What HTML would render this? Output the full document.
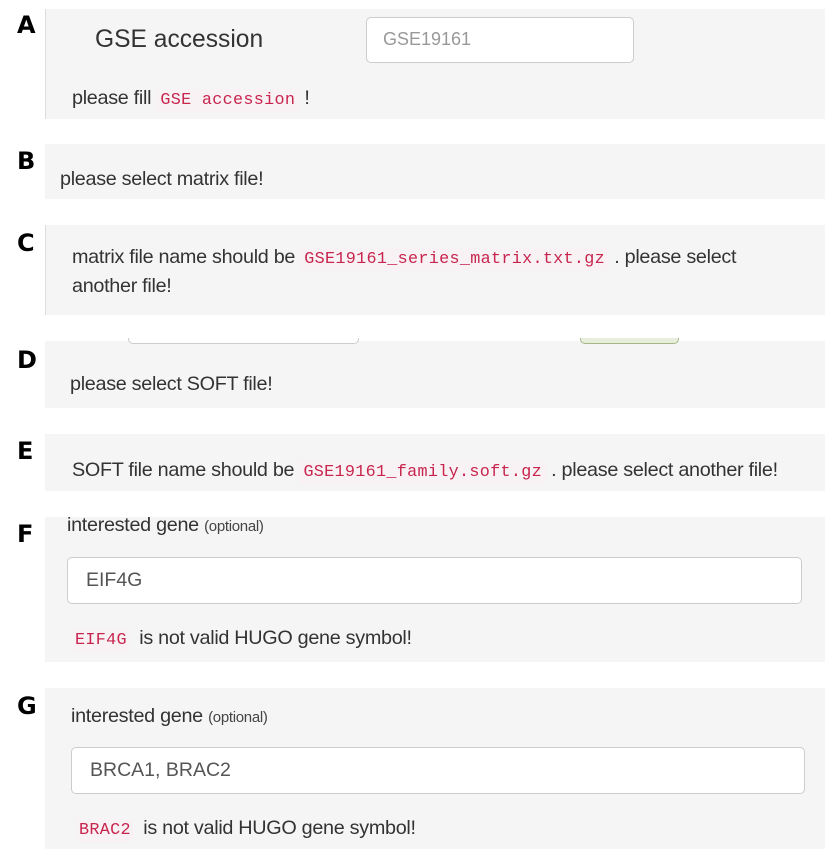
<!DOCTYPE html>
<html><head><style>
body{margin:0;width:825px;height:849px;background:#fff;position:relative;font-family:"Liberation Sans",sans-serif;color:#333;overflow:hidden}
.p{position:absolute;left:45px;right:0;background:#f5f5f5}
.t{position:absolute;font-size:19.8px;white-space:nowrap;letter-spacing:-0.3px}
code{font-family:"Liberation Mono",monospace;font-size:16.8px;color:#c7254e;background:#f9f2f4;padding:2px 4px;border-radius:3px;letter-spacing:0.3px}
.L{position:absolute;left:17px;font-family:"DejaVu Sans",sans-serif;font-weight:bold;font-size:24px;color:#000}
.in{position:absolute;background:#fff;border:1.5px solid #ccc;border-radius:5px;box-sizing:border-box;font-size:19.5px;color:#555}
small{font-size:15px;color:#444}
</style></head><body>
<div class="L" style="top:11px">A</div>
<div class="L" style="top:147px">B</div>
<div class="L" style="top:229px">C</div>
<div class="L" style="top:346px">D</div>
<div class="L" style="top:437px">E</div>
<div class="L" style="top:520px">F</div>
<div class="L" style="top:692px">G</div>

<div class="p" style="top:9px;height:110px;border-left:1px solid #ddd"></div>
<div class="t" style="left:95px;top:26px;font-size:24.6px;letter-spacing:0">GSE accession</div>
<div class="in" style="left:366px;top:17px;width:268px;height:46px;padding:11px 16px;color:#999;font-size:18px">GSE19161</div>
<div class="t" style="left:72px;top:87px">please fill <code>GSE accession</code> !</div>

<div class="p" style="top:144px;height:55px"></div>
<div class="t" style="left:60px;top:168px">please select matrix file!</div>

<div class="p" style="top:225px;height:90px;border-left:1px solid #ddd"></div>
<div class="t" style="left:72px;top:246px">matrix file name should be <code>GSE19161_series_matrix.txt.gz</code> . please select</div>
<div class="t" style="left:72px;top:275px">another file!</div>

<div class="p" style="top:341px;height:67px"></div>
<div style="position:absolute;left:128px;top:338px;width:229px;height:5px;border:1px solid #ccc;border-top:none;border-radius:0 0 5px 5px;background:#fff"></div>
<div style="position:absolute;left:580px;top:338px;width:97px;height:5px;border:1.5px solid #a5b88a;border-top:none;border-radius:0 0 5px 5px;background:#e8eedc"></div>
<div class="t" style="left:70px;top:373px">please select SOFT file!</div>

<div class="p" style="top:434px;height:57px"></div>
<div class="t" style="left:72px;top:459px">SOFT file name should be <code>GSE19161_family.soft.gz</code> . please select another file!</div>

<div class="p" style="top:517px;height:145px"></div>
<div class="t" style="left:67px;top:514px">interested gene <small>(optional)</small></div>
<div class="in" style="left:67px;top:557px;width:735px;height:47px;padding:11px 18px">EIF4G</div>
<div class="t" style="left:73px;top:627px"><code style="padding:2px 2px">EIF4G</code>&nbsp; is not valid HUGO gene symbol!</div>

<div class="p" style="top:688px;height:161px"></div>
<div class="t" style="left:71px;top:705px">interested gene <small>(optional)</small></div>
<div class="in" style="left:71px;top:747px;width:734px;height:47px;padding:11px 18px">BRCA1, BRAC2</div>
<div class="t" style="left:77px;top:817px"><code style="padding:2px 2px">BRAC2</code>&nbsp; is not valid HUGO gene symbol!</div>
</body></html>
